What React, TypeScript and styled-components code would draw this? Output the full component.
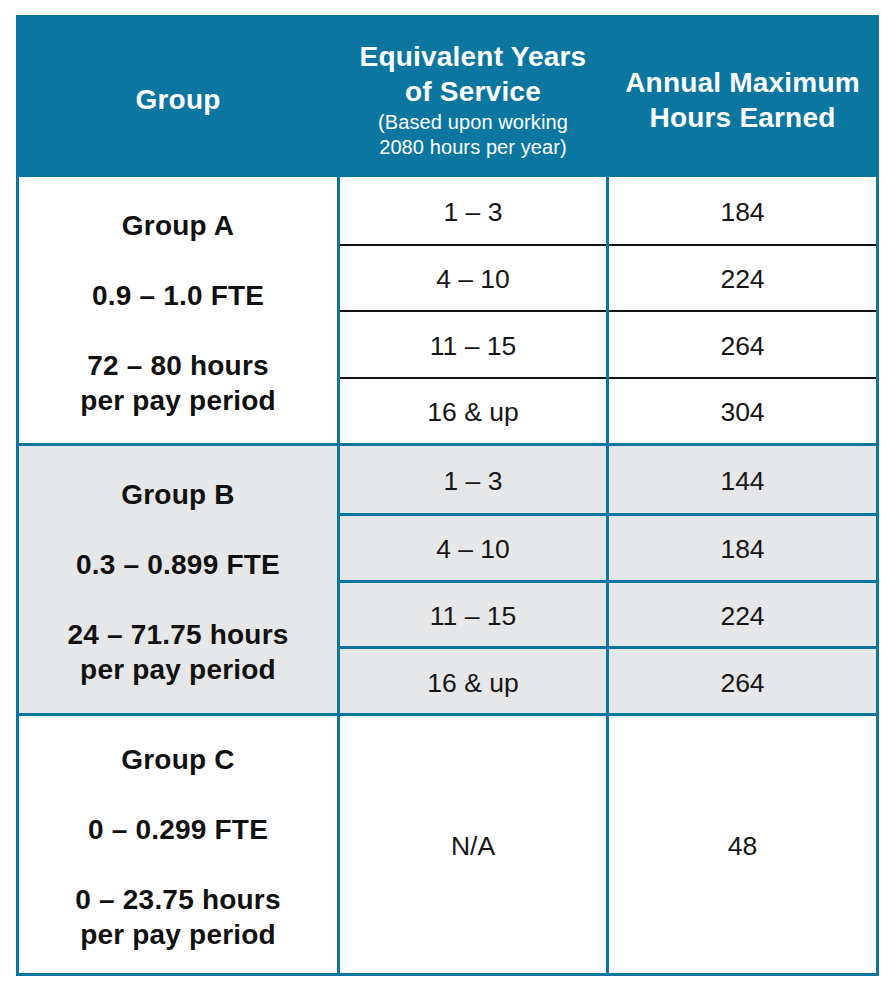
import React from "react";
import styled, { createGlobalStyle } from "styled-components";

const BLUE = "#0b77a1";
const GREY = "#e6e7e9";

const Global = createGlobalStyle`
  html, body { margin: 0; padding: 0; background: #ffffff; }
  body { font-family: "Liberation Sans", Arial, Helvetica, sans-serif; color: #111111; }
`;

const Page = styled.div`
  padding: 15px 0 0 16px;
  width: 896px;
  height: 996px;
  box-sizing: border-box;
`;

const Table = styled.div`
  width: 863px;
  box-sizing: border-box;
  border: 3px solid ${BLUE};
  background: ${BLUE};
  display: flex;
  flex-direction: column;
  gap: 3px;
`;

const Header = styled.div`
  display: grid;
  grid-template-columns: 318px 266px 267px;
  column-gap: 3px;
  height: 156px;
  background: ${BLUE};
  color: #ffffff;
`;

const HeadCell = styled.div`
  display: flex;
  flex-direction: column;
  align-items: center;
  justify-content: center;
  text-align: center;
  padding-top: 7px;
`;

const HeadTitle = styled.div`
  font-size: 28px;
  font-weight: 700;
  line-height: 35px;
  letter-spacing: 0.2px;
`;

const HeadNote = styled.div`
  font-size: 20px;
  font-weight: 400;
  line-height: 25px;
  letter-spacing: 0.1px;
  margin-top: 1px;
`;

const Group = styled.div<{ $h: number; $bg: string }>`
  display: grid;
  grid-template-columns: 318px 1fr;
  column-gap: 3px;
  height: ${(p) => p.$h}px;
  background: ${BLUE};
  & > * { background: ${(p) => p.$bg}; }
`;

const Label = styled.div`
  display: flex;
  flex-direction: column;
  align-items: center;
  justify-content: center;
  gap: 35px;
  text-align: center;
  font-size: 28px;
  font-weight: 700;
  line-height: 35px;
  letter-spacing: 0.2px;
  color: #111111;
  padding-top: 5px;
`;

const Para = styled.div``;

const Tiers = styled.div`
  display: grid;
  grid-template-columns: 266px 267px;
  grid-auto-rows: 1fr;
  column-gap: 3px;
  background: ${BLUE} !important;
`;

const Value = styled.div<{ $line: string; $w: number; $bg: string; $first: boolean }>`
  display: flex;
  align-items: center;
  justify-content: center;
  padding-top: 4px;
  font-size: 26.5px;
  font-weight: 400;
  color: #161616;
  background: ${(p) => p.$bg};
  border-top: ${(p) => (p.$first ? "none" : `${p.$w}px solid ${p.$line}`)};
`;

type Tier = [string, string];
type GroupData = {
  lines: string[][];
  tiers: Tier[];
  bg: string;
  height: number;
  line: string;
  lineW: number;
};

const groups: GroupData[] = [
  {
    lines: [["Group A"], ["0.9 – 1.0 FTE"], ["72 – 80 hours", "per pay period"]],
    tiers: [
      ["1 – 3", "184"],
      ["4 – 10", "224"],
      ["11 – 15", "264"],
      ["16 & up", "304"],
    ],
    bg: "#ffffff",
    height: 266,
    line: "#111111",
    lineW: 2,
  },
  {
    lines: [["Group B"], ["0.3 – 0.899 FTE"], ["24 – 71.75 hours", "per pay period"]],
    tiers: [
      ["1 – 3", "144"],
      ["4 – 10", "184"],
      ["11 – 15", "224"],
      ["16 & up", "264"],
    ],
    bg: GREY,
    height: 267,
    line: BLUE,
    lineW: 3,
  },
  {
    lines: [["Group C"], ["0 – 0.299 FTE"], ["0 – 23.75 hours", "per pay period"]],
    tiers: [["N/A", "48"]],
    bg: "#ffffff",
    height: 257,
    line: BLUE,
    lineW: 3,
  },
];

export default function App() {
  return (
    <Page>
      <Global />
      <Table>
        <Header>
          <HeadCell>
            <HeadTitle>Group</HeadTitle>
          </HeadCell>
          <HeadCell>
            <HeadTitle>Equivalent Years</HeadTitle>
            <HeadTitle>of Service</HeadTitle>
            <HeadNote>
              (Based upon working
              <br />
              2080 hours per year)
            </HeadNote>
          </HeadCell>
          <HeadCell>
            <HeadTitle>Annual Maximum</HeadTitle>
            <HeadTitle>Hours Earned</HeadTitle>
          </HeadCell>
        </Header>
        {groups.map((g, gi) => (
          <Group key={gi} $h={g.height} $bg={g.bg}>
            <Label>
              {g.lines.map((p, pi) => (
                <Para key={pi}>
                  {p.map((l, li) => (
                    <div key={li}>{l}</div>
                  ))}
                </Para>
              ))}
            </Label>
            <Tiers>
              {g.tiers.map((t, ti) => (
                <React.Fragment key={ti}>
                  <Value $line={g.line} $w={g.lineW} $bg={g.bg} $first={ti === 0}>
                    {t[0]}
                  </Value>
                  <Value $line={g.line} $w={g.lineW} $bg={g.bg} $first={ti === 0}>
                    {t[1]}
                  </Value>
                </React.Fragment>
              ))}
            </Tiers>
          </Group>
        ))}
      </Table>
    </Page>
  );
}
